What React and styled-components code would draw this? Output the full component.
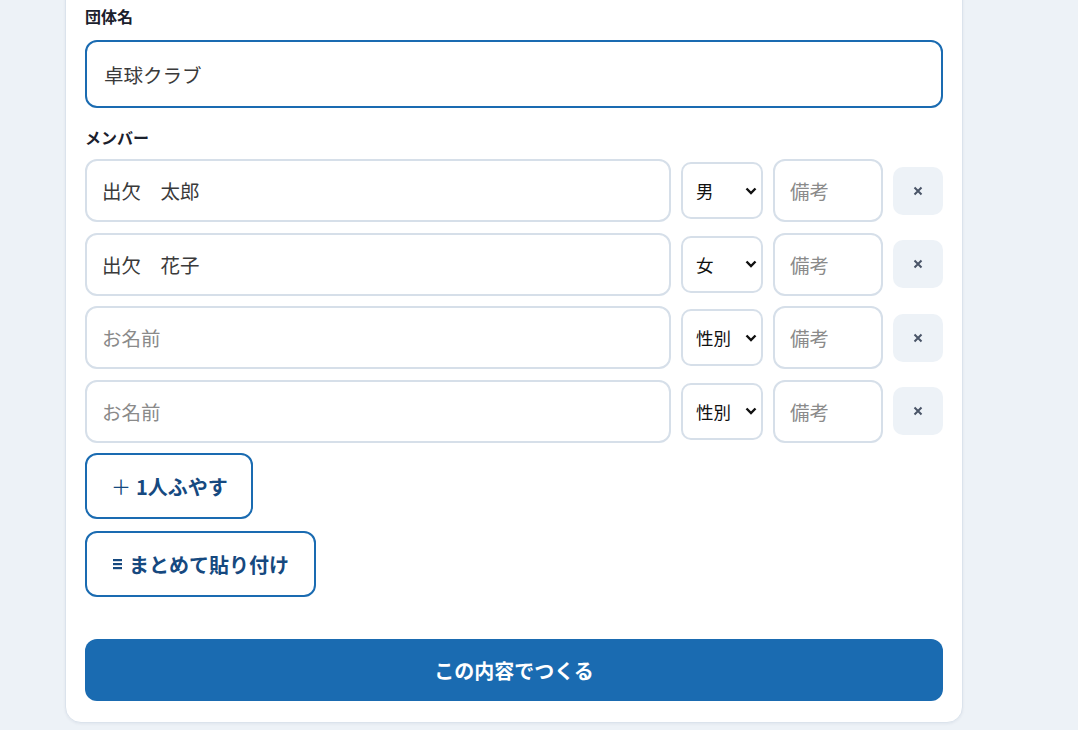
import React from "react";
import styled, { createGlobalStyle } from "styled-components";

const Global = createGlobalStyle`
  html, body { margin: 0; padding: 0; background: #edf2f7; }
  body { font-family: "Noto Sans CJK JP", "Noto Sans", sans-serif; color: #1f2937; overflow: hidden; }
  * { box-sizing: border-box; }
`;

const Page = styled.div`
  width: 1078px;
  height: 730px;
  overflow: hidden;
  display: flex;
  align-items: flex-start;
  padding-left: 65px;
`;

const Card = styled.div`
  width: 898px;
  margin-top: -20px;
  background: #fff;
  border: 1px solid #dbe3ec;
  border-radius: 16px;
  box-shadow: 0 1px 3px rgba(15, 40, 80, 0.06);
  padding: 24px 19px 21px 19px;
  display: flex;
  flex-direction: column;
`;

const Label = styled.div`
  font-size: 16px;
  font-weight: 700;
  line-height: 22px;
  color: #1a202c;
  margin-top: ${(p) => p.$mt || 0}px;
  margin-bottom: ${(p) => p.$mb || 8}px;
`;

const TextInput = styled.input`
  font-family: inherit;
  font-size: 19.5px;
  color: #3a3a3a;
  height: ${(p) => p.$h || 63}px;
  width: ${(p) => (p.$w ? p.$w + "px" : "100%")};
  flex: ${(p) => (p.$grow ? "1 1 auto" : "none")};
  min-width: 0;
  border: 2px solid ${(p) => (p.$focus ? "#1a6bb1" : "#d6dfe9")};
  border-radius: 12px;
  padding: 0 ${(p) => p.$px || 15}px;
  outline: none;
  background: #fff;
  &::placeholder { color: #8a8a8a; }
`;

const Rows = styled.div`
  display: flex;
  flex-direction: column;
  gap: 10.5px;
`;

const Row = styled.div`
  display: flex;
  align-items: center;
  gap: 10px;
`;

const SelectWrap = styled.div`
  position: relative;
  width: 82px;
  height: 57px;
  flex: none;
`;

const Select = styled.select`
  appearance: none;
  -webkit-appearance: none;
  font-family: inherit;
  font-size: 17.5px;
  color: #111;
  width: 100%;
  height: 100%;
  border: 2px solid #d6dfe9;
  border-radius: 10px;
  padding: 0 20px 0 13px;
  background: #fff;
  outline: none;
`;

const Chevron = styled.svg`
  position: absolute;
  right: 6px;
  top: 50%;
  width: 12px;
  height: 8px;
  margin-top: -4px;
  pointer-events: none;
`;

const DelButton = styled.button`
  width: 50px;
  height: 48px;
  border: none;
  border-radius: 10px;
  background: #edf2f7;
  color: #4a5568;
  flex: none;
  display: flex;
  align-items: center;
  justify-content: center;
  padding: 0;
`;

const OutlineButton = styled.button`
  align-self: flex-start;
  height: 66px;
  padding: ${(p) => p.$pad};
  margin-top: ${(p) => p.$mt}px;
  border: 2px solid #1a6bb1;
  border-radius: 12px;
  background: #fff;
  color: #16497f;
  font-family: inherit;
  font-size: 20px;
  font-weight: 700;
  display: flex;
  align-items: center;
  gap: ${(p) => p.$gap}px;
`;

const Plus = styled.span`
  font-weight: 400;
`;

const Submit = styled.button`
  margin-top: 42px;
  height: 62px;
  width: 100%;
  border: none;
  border-radius: 12px;
  background: #1a6bb1;
  color: #fff;
  font-family: inherit;
  font-size: 20px;
  font-weight: 700;
`;

const members = [
  { name: "出欠　太郎", gender: "男" },
  { name: "出欠　花子", gender: "女" },
  { name: "", gender: "" },
  { name: "", gender: "" },
];

function ListIcon() {
  return (
    <svg width="9" height="12" viewBox="0 0 9 12">
      <rect x="0" y="1" width="9" height="2.2" fill="#16497f" />
      <rect x="0" y="5" width="9" height="2.2" fill="#16497f" />
      <rect x="0" y="9" width="9" height="2.2" fill="#16497f" />
    </svg>
  );
}

export default function App() {
  return (
    <>
      <Global />
      <Page>
        <Card>
          <Label $mb={13}>団体名</Label>
          <TextInput $h={68} $px={17} $focus defaultValue="卓球クラブ" />
          <Label $mt={18} $mb={11}>メンバー</Label>
          <Rows>
            {members.map((m, i) => (
              <Row key={i}>
                <TextInput $grow placeholder="お名前" defaultValue={m.name} />
                <SelectWrap>
                  <Select defaultValue={m.gender}>
                    <option value="">性別</option>
                    <option value="男">男</option>
                    <option value="女">女</option>
                  </Select>
                  <Chevron viewBox="0 0 12 8">
                    <path d="M1.5 1.5 L6 6 L10.5 1.5" fill="none" stroke="#111" strokeWidth="2.4" />
                  </Chevron>
                </SelectWrap>
                <TextInput $w={110} placeholder="備考" />
                <DelButton aria-label="削除">
                  <svg width="10" height="10" viewBox="0 0 10 10">
                    <path d="M1.5 1.5 L8.5 8.5 M8.5 1.5 L1.5 8.5" stroke="#4a5568" strokeWidth="2" />
                  </svg>
                </DelButton>
              </Row>
            ))}
          </Rows>
          <OutlineButton $mt={10.5} $pad="0 23px 0 24px" $gap={5}>
            <Plus>＋</Plus>1人ふやす
          </OutlineButton>
          <OutlineButton $mt={12} $pad="0 25px 0 26px" $gap={7}>
            <ListIcon />まとめて貼り付け
          </OutlineButton>
          <Submit>この内容でつくる</Submit>
        </Card>
      </Page>
    </>
  );
}
